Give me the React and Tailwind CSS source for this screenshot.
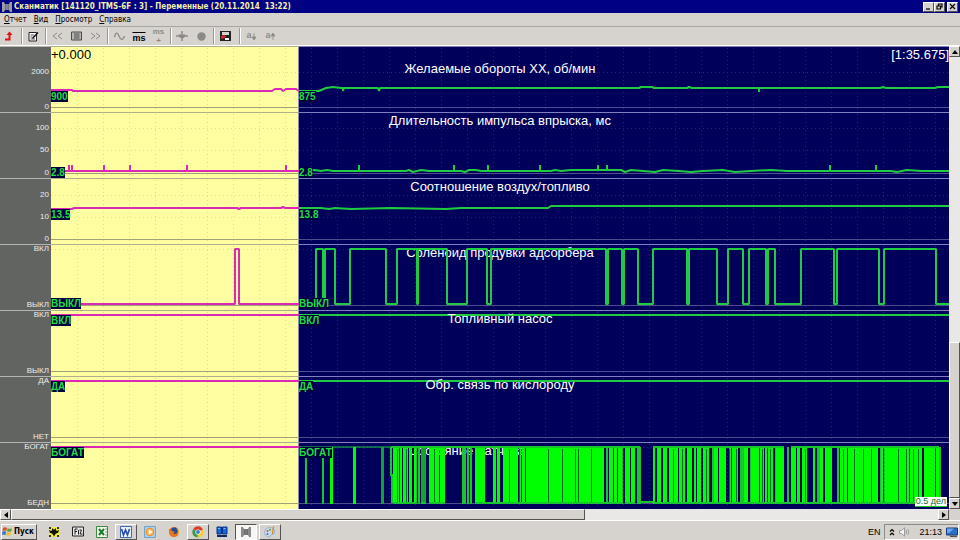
import React from 'react'

// x is measured from the left edge of the plot, 898 units wide. The cursor is at 248.
const CURSOR = 248
const WIDTH = 898
const HIGH = 5
const LOW = 60

const gridX = Array.from({ length: 34 }, (_, i) => 26 + i * 26)

// turns a list of switching moments into points, starting from the low level
function stepPoints(from, to, edges) {
  let level = LOW
  const points = [[from, level]]
  edges.forEach((x) => {
    points.push([x, level])
    level = level === LOW ? HIGH : LOW
    points.push([x, level])
  })
  points.push([to, level])
  return points
}

// flat line with short spikes
function spikePoints(from, to, base, peak, spikes) {
  const points = [[from, base]]
  spikes.forEach((x) => {
    points.push([x, base], [x, peak], [x, base])
  })
  points.push([to, base])
  return points
}

const oxygenBars = [
  [279, 282], [302, 305], [342, 348], [349, 351], [352, 357], [358, 361], [363, 365], [378, 388],
  [389, 394], [424, 427], [427, 434], [442, 445], [446, 449], [452, 467], [468, 470], [471, 474],
  [475, 553], [558, 562], [563, 566], [567, 571], [574, 579], [580, 584], [602, 604], [606, 610],
  [612, 616], [618, 627], [628, 634], [636, 641], [643, 645], [646, 650], [652, 658], [663, 667],
  [668, 675], [678, 680], [681, 687], [693, 697], [700, 708], [709, 713], [714, 716], [717, 722],
  [725, 733], [740, 745], [746, 749], [751, 756], [762, 764], [769, 772], [774, 781], [789, 796],
  [797, 827], [830, 832], [834, 858], [859, 871], [873, 884], [885, 888],
]
const oxygenLines = [
  254, 271, 364, 367, 370, 373, 411, 413, 416, 419, 519, 555, 570, 586, 588, 661, 662, 689, 691,
  699, 724, 736, 766, 768, 786, 829, 833, 888,
]
const oxygenSeams = [
  346, 355, 383, 458, 468, 497, 511, 524, 527, 540, 622, 631, 655, 678, 685, 711, 719, 754, 792,
  803, 812, 820, 847, 855, 862, 867,
]

const rows = [
  {
    title: 'Желаемые обороты XX, об/мин',
    titleClass: 'z-10 pt-[14px]',
    ticks: [['2000', 26], ['0', 61]],
    past: ['900', 45],
    future: ['875', 45],
    pink: [[0, 44], [21, 44], [22, 45], [221, 45], [224, 43], [230, 43], [232, 45], [235, 43], [245, 43], [248, 45]],
    green: [
      [248, 45], [268, 45], [275, 42], [282, 41], [290, 42], [292, 42], [292, 45], [293, 42], [327, 42],
      [328, 45], [329, 42], [588, 42], [590, 41], [601, 41], [603, 42], [636, 42], [638, 41], [641, 42],
      [708, 42], [708, 46], [708, 42], [829, 42], [832, 41], [835, 42], [884, 42], [887, 41], [898, 41],
    ],
  },
  {
    title: 'Длительность импульса впрыска, мс',
    titleClass: 'z-10',
    ticks: [['100', 16], ['50', 38], ['0', 61]],
    past: ['2.8', 55],
    future: ['2.8', 55],
    pink: spikePoints(0, 248, 59, 53, [18, 21, 53, 79, 136, 235]),
    green: [
      [248, 59], [264, 58], [270, 59], [276, 58], [282, 59],
      ...spikePoints(284, 355, 59, 53, [308]),
      [358, 58], [362, 60], [370, 58], [378, 59],
      ...spikePoints(380, 410, 59, 53, [403]),
      [414, 60], [418, 58], [425, 58], [430, 59],
      ...spikePoints(434, 500, 59, 53, [437, 489]),
      [504, 58], [510, 59],
      ...spikePoints(520, 570, 58, 53, [547, 556]),
      [574, 60], [580, 58], [592, 59], [604, 60], [612, 58], [628, 59], [640, 60], [652, 59], [672, 58],
      [684, 60], [700, 59], [720, 58], [736, 59],
      ...spikePoints(750, 840, 59, 53, [779, 825]),
      [846, 60], [856, 58], [870, 59], [898, 59],
    ],
  },
  {
    title: 'Соотношение воздух/топливо',
    titleClass: 'z-10',
    ticks: [['20', 17], ['10', 39], ['0', 61]],
    past: ['13.5', 31],
    future: ['13.8', 31],
    pink: [[0, 31], [21, 31], [23, 30], [186, 30], [188, 31], [190, 30], [230, 30], [232, 29], [234, 30], [248, 30]],
    green: [[248, 30], [270, 30], [278, 31], [284, 30], [300, 31], [340, 30], [395, 31], [410, 30], [497, 30], [500, 28], [898, 28]],
  },
  {
    title: 'Соленоид продувки адсорбера',
    titleClass: '',
    ticks: [['ВКЛ', 5], ['ВЫКЛ', 61]],
    past: ['ВЫКЛ', 54],
    future: ['ВЫКЛ', 54],
    pink: stepPoints(0, 248, [184, 188]),
    green: stepPoints(248, 898, [
      265, 272, 274, 284, 299, 335, 346, 366, 367, 396, 416, 436, 440, 555, 557, 571, 573, 587, 602,
      636, 638, 666, 677, 692, 698, 715, 717, 724, 750, 783, 786, 828, 833, 885,
    ]),
  },
  {
    title: 'Топливный насос',
    titleClass: 'z-10',
    ticks: [['ВКЛ', 5], ['ВЫКЛ', 61]],
    past: ['ВКЛ', 5],
    future: ['ВКЛ', 5],
    pink: [[0, 5], [248, 5]],
    green: [[248, 5], [898, 5]],
  },
  {
    title: 'Обр. связь по кислороду',
    titleClass: 'z-10',
    ticks: [['ДА', 5], ['НЕТ', 61]],
    past: ['ДА', 5],
    future: ['ДА', 5],
    pink: [[0, 5], [248, 5]],
    green: [[248, 5], [898, 5]],
  },
  {
    title: 'Состояние датчика кислорода',
    titleClass: '',
    ticks: [['БОГАТ', 5], ['БЕДН', 61]],
    past: ['БОГАТ', 5],
    future: ['БОГАТ', 5],
    pink: [[0, 5], [248, 5]],
    green: [[248, 5], [340, 5]],
    dense: true,
  },
]

function toPath(points) {
  return 'M' + points.map(([x, y]) => `${x} ${y}`).join('L')
}

function DenseTrace() {
  return (
    <g shapeRendering="crispEdges">
      {oxygenLines.map((x) => (
        <rect key={x} x={x} y={x < 275 ? 15 : 5} width="2" height={x < 275 ? 47 : 57} fill="#18c52c" />
      ))}
      {oxygenBars.map(([a, b]) => (
        <rect key={a} x={a} y="5" width={b - a} height="57" fill="#00ff00" />
      ))}
      <rect x="330" y="5" width="3" height="57" fill="#12a52c" />
      <rect x="370" y="5" width="5" height="57" fill="#12a52c" />
      {oxygenSeams.map((x) => (
        <rect key={x} x={x} y="7" width="1" height="54" fill="#0a6a2a" />
      ))}
      <path d="M340 5H589M602 5H733M740 5H888M342 61H365M370 61H375M378 61H394M424 61H571M574 61H584M589 60H602M603 61H889" stroke="#18c52c" strokeWidth="2" fill="none" />
      <path d="M340 5V33H341V61M589 5V60" stroke="#18c52c" strokeWidth="2" fill="none" />
    </g>
  )
}

function Value({ value, className }) {
  const [text, top] = value
  return (
    <span
      style={{ top }}
      className={`absolute bg-[#00003c] text-[#1fdc45] text-[10px] leading-[11px] font-bold ${className}`}>
      {text}
    </span>
  )
}

function ChartRow({ row }) {
  return (
    <div className="flex h-[66px] last:h-[67px]">
      <div className="relative w-[51px] shrink-0 border-t border-[#b4b4b0] bg-[#626461] text-[8px] leading-[10px] text-[#ececec]">
        {row.ticks.map(([label, y]) => (
          <span key={label} style={{ top: y - 6 }} className="absolute right-[2px]">{label}</span>
        ))}
      </div>
      <div className="relative grid flex-1 grid-cols-[248fr_650fr]">
        <div className="border-t border-r border-t-[#b0b08c] border-r-[#8c8cb4] bg-[#ffffa2]" />
        <div className="border-t border-[#8080c0] bg-[#00005a]" />
        <h2 className={`absolute inset-x-0 top-0 text-center text-[13px] leading-[18px] text-white ${row.titleClass}`}>
          {row.title}
        </h2>
        <svg viewBox={`0 0 ${WIDTH} 66`} preserveAspectRatio="none" className="absolute top-0 left-0 h-[66px] w-full">
          <g shapeRendering="crispEdges" strokeDasharray="1 3">
            {gridX.map((x) => (
              <path key={x} d={`M${x + 0.5} 2V66`} stroke={x < CURSOR ? '#dede9c' : '#222272'} />
            ))}
            {row.ticks.filter(([, y]) => y < 60).map(([label, y]) => (
              <g key={label}>
                <path d={`M0 ${y + 0.5}H${CURSOR}`} stroke="#dede9c" />
                <path d={`M${CURSOR} ${y + 0.5}H${WIDTH}`} stroke="#222272" />
              </g>
            ))}
          </g>
          <g shapeRendering="crispEdges">
            <path d={`M0 61.5H${CURSOR}`} stroke="#a2a278" />
            <path d={`M${CURSOR} 61.5H${WIDTH}`} stroke="#4c4c8e" />
          </g>
          <path d={toPath(row.pink)} fill="none" stroke="#dc28b4" strokeWidth="2" strokeLinejoin="bevel" />
          <path d={toPath(row.green)} fill="none" stroke="#1fcb40" strokeWidth={row.dense ? 1 : 2} strokeLinejoin="bevel" />
          {row.dense && <DenseTrace />}
        </svg>
        <Value value={row.past} className="left-0" />
        <div className="pointer-events-none absolute inset-0 grid grid-cols-[248fr_650fr]">
          <span />
          <span className="relative"><Value value={row.future} className="left-0" /></span>
        </div>
      </div>
    </div>
  )
}

function Separator() {
  return <span className="h-4 w-[2px] border-l border-[#9a9890] bg-white" />
}

function ToolButton({ label, className, children }) {
  return (
    <button type="button" aria-label={label} className={`flex h-[18px] items-center justify-center ${className}`}>
      {children}
    </button>
  )
}

function Toolbar() {
  return (
    <div className="flex h-[19px] items-center border-b border-white bg-[#d6d3ce] text-[#8c8a86]">
      <ToolButton label="Выход" className="w-[21px] pr-[5px]">
        <svg width="9" height="10" viewBox="0 0 9 10">
          <path d="M1 8.500H5.500V3" fill="none" stroke="#e01010" strokeWidth="2" />
          <path d="M2.500 4L5.500 0.500L8.500 4Z" fill="#e01010" />
        </svg>
      </ToolButton>
      <Separator />
      <ToolButton label="Заметка" className="w-[22px] pr-[2px]">
        <svg width="11" height="11" viewBox="0 0 11 11">
          <path d="M1 1.500H8.500V10H1Z" fill="#fff" stroke="#222" />
          <path d="M2.500 4H6M2.500 6H4.500M2.500 8H7" stroke="#555" />
          <path d="M4.500 7.500L10 1.500" stroke="#111" strokeWidth="1.500" />
        </svg>
      </ToolButton>
      <Separator />
      <ToolButton label="Назад" className="w-[20px]">
        <svg width="11" height="8" viewBox="0 0 11 8"><path d="M5 1L1 4L5 7M10 1L6 4L10 7" fill="none" stroke="currentColor" /></svg>
      </ToolButton>
      <ToolButton label="Список" className="w-[19px]">
        <svg width="11" height="10" viewBox="0 0 11 10">
          <path d="M0.500 1H10.500V9H0.500Z" fill="#b8b6b2" stroke="#4a4a4a" />
          <path d="M3 3H8.500M3 5H8.500M3 7H8.500" stroke="#4a4a4a" />
        </svg>
      </ToolButton>
      <ToolButton label="Вперёд" className="w-[21px] pr-[2px]">
        <svg width="11" height="8" viewBox="0 0 11 8"><path d="M1 1L5 4L1 7M6 1L10 4L6 7" fill="none" stroke="currentColor" /></svg>
      </ToolButton>
      <Separator />
      <ToolButton label="График" className="w-[20px]">
        <svg width="11" height="9" viewBox="0 0 11 9"><path d="M0.500 5C1.500 0 3.500 0 5 4S9 9 10.500 4" fill="none" stroke="currentColor" strokeWidth="1.300" /></svg>
      </ToolButton>
      <ToolButton label="Миллисекунды" className="w-[20px] pt-[4px] text-[9px] font-bold text-black">
        <span className="leading-[9px] overline">ms</span>
      </ToolButton>
      <ToolButton label="Миллисекунды плюс" className="w-[19px] flex-col text-[8px] leading-[9px] font-bold">
        <span>ms</span>
        <span>+</span>
      </ToolButton>
      <span className="w-[2px]" />
      <Separator />
      <ToolButton label="Маркер" className="w-[20px]">
        <svg width="12" height="10" viewBox="0 0 12 10">
          <path d="M0 5H12M6 0V10" stroke="currentColor" strokeWidth="1.500" />
          <path d="M2.500 3.500H9.500L8 7H4Z" fill="currentColor" />
        </svg>
      </ToolButton>
      <ToolButton label="Запись" className="w-[18px]">
        <svg width="9" height="9" viewBox="0 0 9 9"><circle cx="4.500" cy="4.500" r="4.200" fill="currentColor" /></svg>
      </ToolButton>
      <span className="w-[3px]" />
      <Separator />
      <ToolButton label="Сохранить" className="w-[21px]">
        <svg width="11" height="10" viewBox="0 0 11 10">
          <path d="M0 0H11V10H0Z" fill="#222" />
          <path d="M2 1H9V4H2Z" fill="#d6d3ce" />
          <path d="M1 5L4 4L6 5L5 7L1 8Z" fill="#d02828" />
          <path d="M5 7H9V9H5Z" fill="#fff" />
        </svg>
      </ToolButton>
      <span className="w-[3px]" />
      <Separator />
      <ToolButton label="Сортировка вниз" className="w-[20px] text-[9px] font-bold">a
        <svg width="4" height="7" viewBox="0 0 4 7"><path d="M2 0V5M0 4H4L2 7Z" fill="currentColor" stroke="currentColor" strokeWidth="0.800" /></svg>
      </ToolButton>
      <ToolButton label="Сортировка вверх" className="w-[18px] text-[9px] font-bold">a
        <svg width="4" height="7" viewBox="0 0 4 7"><path d="M2 7V2M0 3H4L2 0Z" fill="currentColor" stroke="currentColor" strokeWidth="0.800" /></svg>
      </ToolButton>
    </div>
  )
}

const raised = 'border border-t-white border-l-white border-r-[#55534f] border-b-[#55534f] bg-[#d6d3ce]'

function WindowButton({ label, d }) {
  return (
    <button type="button" aria-label={label} className={`flex h-[10px] w-[11px] items-center justify-center ${raised}`}>
      <svg width="7" height="7" viewBox="0 0 7 7"><path d={d} fill="none" stroke="#000" strokeWidth="1.200" /></svg>
    </button>
  )
}

function ScrollButton({ label, d }) {
  return (
    <button type="button" aria-label={label} className={`flex h-[11px] w-[11px] shrink-0 items-center justify-center ${raised}`}>
      <svg width="6" height="6" viewBox="0 0 6 6"><path d={d} fill="#000" /></svg>
    </button>
  )
}

function DeviceIcon({ color }) {
  return (
    <svg width="10" height="10" viewBox="0 0 10 10">
      <path d="M0 0H2L3 2H7L8 0H10V10H8L7 8H3L2 10H0Z" fill={color} />
      <path d="M3.500 2V8M5 2V8M6.500 2V8" stroke="#555" strokeWidth="0.600" />
    </svg>
  )
}

const tasks = [
  { name: 'The Bat!', icon: (
    <svg width="12" height="12" viewBox="0 0 12 12">
      <path d="M1 1H11V11H1Z" fill="#f2ee30" />
      <path d="M1 1H3V3H1ZM9 1H11V3H9ZM1 9H3V11H1ZM9 9H11V11H9Z" fill="#333" />
      <path d="M1 4L3.500 5L4.500 2L6 4L7.500 2L8.500 5L11 4L10 7L9 7L7.500 8L6 10.500L4.500 8L3 7L2 7Z" fill="#111" />
    </svg>
  ) },
  { name: 'Fiz', icon: (
    <svg width="12" height="11" viewBox="0 0 12 11">
      <path d="M0.500 1H11.500V10H0.500Z" fill="#e8e8e8" stroke="#222" />
      <path d="M3 8.500V3H5.500M3 5.500H5M6.500 4V8.500M7.500 4H9.500L8 8H10.500" fill="none" stroke="#222" />
    </svg>
  ) },
  { name: 'Excel', icon: (
    <svg width="12" height="12" viewBox="0 0 12 12">
      <path d="M0.500 0.500H11.500V11.500H0.500Z" fill="#f2f8ee" stroke="#3c8a40" />
      <path d="M3 3L8 9M8 3L3 9" stroke="#1f7a2c" strokeWidth="2" />
      <path d="M9 3H11M9 6H11M9 9H11" stroke="#6aa870" />
    </svg>
  ) },
  { name: 'Word', open: true, icon: (
    <svg width="12" height="12" viewBox="0 0 12 12">
      <path d="M0.500 0.500H11.500V11.500H0.500Z" fill="#e8f0fc" stroke="#4068b8" />
      <path d="M1.500 3L3.500 9L5.500 4L7.500 9L9.500 3" fill="none" stroke="#2450a8" strokeWidth="1.600" />
    </svg>
  ) },
  { name: 'Проигрыватель', icon: (
    <svg width="12" height="12" viewBox="0 0 12 12">
      <path d="M0.500 0.500H11.500V11.500H0.500Z" fill="#a8d0ec" stroke="#70a4cc" />
      <circle cx="6" cy="6" r="4.300" fill="#f09020" />
      <circle cx="6" cy="6" r="3.200" fill="#f8b860" />
      <path d="M4.800 3.500L8.500 6L4.800 8.500Z" fill="#fff" />
    </svg>
  ) },
  { name: 'Firefox', icon: (
    <svg width="12" height="12" viewBox="0 0 12 12">
      <circle cx="6" cy="6" r="5" fill="#e06a18" />
      <circle cx="6.500" cy="4.800" r="3.300" fill="#284c90" />
      <path d="M1 3C2 3 3 3.500 4 5L7 6L5 8C7 9 9 8.500 10.500 5C11.500 9 8 11.500 5 11C2 10.500 0.500 7 1 3Z" fill="#e87820" />
      <path d="M9 2.500C10.500 4 11 6 10 8" fill="none" stroke="#f8c030" />
    </svg>
  ) },
  { name: 'Chrome', open: true, icon: (
    <svg width="12" height="12" viewBox="0 0 12 12">
      <path d="M6 6L1.200 3A5.500 5.500 0 0 1 11 3.500Z" fill="#dc3c2c" />
      <path d="M6 6L11 3.500A5.500 5.500 0 0 1 5.500 11.500Z" fill="#f4cc30" />
      <path d="M6 6L5.500 11.500A5.500 5.500 0 0 1 1.200 3Z" fill="#3a9c48" />
      <circle cx="6" cy="6" r="2.600" fill="#fff" />
      <circle cx="6" cy="6" r="2" fill="#3c7ce0" />
    </svg>
  ) },
  { name: 'Сеть', icon: (
    <svg width="12" height="12" viewBox="0 0 12 12">
      <path d="M1 1H5.500V8H1ZM6.500 1H11V8H6.500Z" fill="#1868e0" stroke="#0c3080" />
      <path d="M1 9H11V11H1Z" fill="#102860" />
      <path d="M2 2.500H4M7.500 2.500H9.500" stroke="#80c0ff" />
    </svg>
  ) },
  { name: 'Сканматик', open: true, active: true, icon: <DeviceIcon color="#8a8a8a" /> },
  { name: 'Paint', open: true, icon: (
    <svg width="12" height="12" viewBox="0 0 12 12">
      <path d="M6 1.500C2 1.500 0.500 4 0.500 6.500S3 11.500 6 11C7 10 6 9 7.500 8.500C10 8.500 11 7 10.500 5C10 2.500 8 1.500 6 1.500Z" fill="#c4dcec" stroke="#88a8bc" strokeWidth="0.700" />
      <circle cx="3.500" cy="5" r="1" fill="#d05040" />
      <circle cx="6" cy="3.800" r="1" fill="#50a050" />
      <circle cx="3.500" cy="8" r="1" fill="#4070d0" />
      <path d="M9.500 0.500L8.500 8" stroke="#e08828" strokeWidth="1.400" />
    </svg>
  ) },
]

function Taskbar() {
  return (
    <footer className="flex h-5 items-center border-t border-white bg-[#d6d3ce] pt-[2px] text-[9px] leading-[12px] text-black">
      <button type="button" className={`ml-px flex h-4 w-9 items-center gap-px font-['DejaVu_Sans_Condensed','DejaVu_Sans',sans-serif] text-[8px] leading-[12px] font-bold ${raised}`}>
        <svg width="11" height="11" viewBox="0 0 11 11" className="shrink-0">
          <path d="M1 2C2.500 1 3.500 1.300 5 2L4.300 5C3 4.300 2 4.300 0.500 5Z" fill="#e05030" />
          <path d="M5.600 2.200C7 3 8.500 3 10 2.300L9.300 5.300C8 6 6.500 6 5 5.200Z" fill="#58a838" />
          <path d="M0.300 5.800C2 5 3 5.200 4.200 5.800L3.500 9C2 8.200 1.200 8.300 0 9Z" fill="#3c70d8" />
          <path d="M4.800 6C6.200 6.800 7.800 6.800 9.200 6L8.500 9C7 9.800 5.500 9.800 4.100 9.200Z" fill="#f0c030" />
        </svg>
        Пуск
      </button>
      <nav className="ml-[6px] flex gap-[2px]">
        {tasks.map((task) => (
          <button
            key={task.name}
            type="button"
            aria-label={task.name}
            className={`flex h-4 w-[22px] items-center justify-center ${
              task.active
                ? 'border border-t-[#55534f] border-l-[#55534f] border-r-white border-b-white bg-[#f6f6f4]'
                : task.open ? raised : ''
            }`}>
            {task.icon}
          </button>
        ))}
      </nav>
      <span className="ml-auto pr-[4px]">EN</span>
      <div className="mr-px flex h-4 items-center gap-[4px] border border-t-[#8c8a86] border-l-[#8c8a86] border-r-white border-b-white pl-1">
        <svg width="6" height="8" viewBox="0 0 6 8"><path d="M1 3.500L3 1.500L5 3.500M1 7L3 5L5 7" fill="none" stroke="#000" strokeWidth="1.200" /></svg>
        <svg width="12" height="10" viewBox="0 0 12 10">
          <path d="M0.500 3.500H2.500L5.500 0.800V9.200L2.500 6.500H0.500Z" fill="#f4f4f4" stroke="#8a8a8a" strokeWidth="0.800" />
          <path d="M7 3Q8.300 5 7 7M8.800 2Q10.800 5 8.800 8" fill="none" stroke="#a0a0a0" />
        </svg>
        <time className="ml-1">21:13</time>
        <svg width="12" height="10" viewBox="0 0 12 10">
          <path d="M0.500 1H11.500V8H0.500Z" fill="#2c70c8" stroke="#1c3c70" />
          <path d="M1 1.500H8L3 6H1Z" fill="#68a8f0" />
          <path d="M4 9.300H11" stroke="#303030" />
        </svg>
      </div>
    </footer>
  )
}

function App() {
  return (
    <div className="flex min-h-screen flex-col overflow-hidden bg-[#d6d3ce] font-['Liberation_Sans',Arial,sans-serif]">
      <header className="flex h-[13px] items-center bg-[#000084] pr-[2px] pl-[2px]">
        <DeviceIcon color="#9a9aa8" />
        <h1 className="ml-[2px] font-['DejaVu_Sans_Condensed','DejaVu_Sans',sans-serif] text-[8px] font-bold whitespace-pre text-[#f4f0a8]">
          Сканматик [141120_ITMS-6F : 3] - Переменные (20.11.2014  13:22)
        </h1>
        <div className="ml-auto flex">
          <WindowButton label="Свернуть" d="M1 6H5" />
          <WindowButton label="Восстановить" d="M2.500 2.500V1H6V4H4.500M1 3H4.500V6H1Z" />
          <span className="w-[2px]" />
          <WindowButton label="Закрыть" d="M1 1L6 6M6 1L1 6" />
        </div>
      </header>
      <nav className="flex h-[14px] items-center gap-[7px] border-b border-[#a8a6a0] pl-1 font-['DejaVu_Sans_Condensed','DejaVu_Sans',sans-serif] text-[8px] leading-[10px] text-black">
        <button type="button"><u>О</u>тчет</button>
        <button type="button"><u>В</u>ид</button>
        <button type="button"><u>П</u>росмотр</button>
        <button type="button"><u>С</u>правка</button>
      </nav>
      <Toolbar />
      <main className="flex">
        <section className="relative flex-1">
          <div>
            {rows.map((row) => <ChartRow key={row.title} row={row} />)}
          </div>
          <span className="absolute top-0 left-[51px] text-[13px] leading-[17px] text-black">+0.000</span>
          <span className="absolute top-0 right-0 text-[13px] leading-[17px] text-white">[1:35.675]</span>
          <span className="absolute right-[2px] bottom-[2px] border-b border-[#18c52c] bg-white px-px text-[9px] leading-[9px] text-[#0a6a2a]">0.5 дел</span>
        </section>
        <div className="flex w-[11px] flex-col bg-[#e9e8e6]">
          <ScrollButton label="Вверх" d="M3 1L6 5H0Z" />
          <div className="grow-[286]" />
          <div className={`grow-[155] ${raised}`} />
          <ScrollButton label="Вниз" d="M3 5L6 1H0Z" />
        </div>
      </main>
      <div className="flex h-[11px] bg-[#e9e8e6]">
        <ScrollButton label="Влево" d="M1 3L5 0V6Z" />
        <div className={`grow-[573] ${raised}`} />
        <div className="grow-[354]" />
        <ScrollButton label="Вправо" d="M5 3L1 0V6Z" />
        <span className="w-[11px] bg-[#d6d3ce]" />
      </div>
      <Taskbar />
    </div>
  )
}

export default App
